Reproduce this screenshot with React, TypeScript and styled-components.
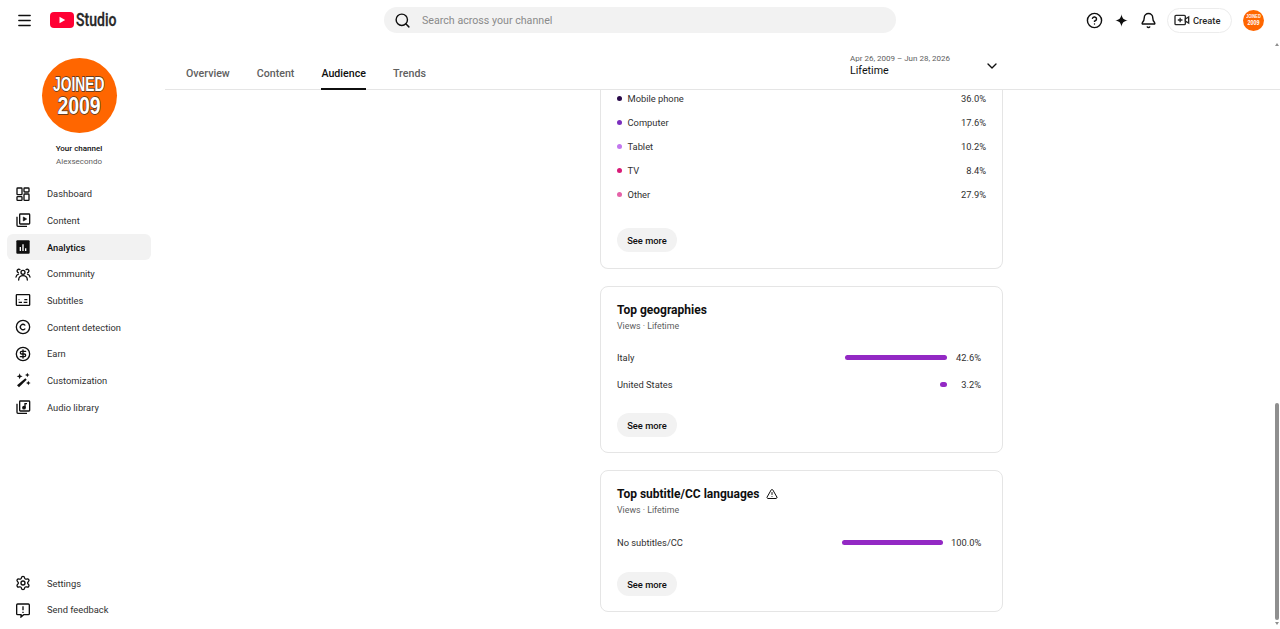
import React from 'react';
import styled, { createGlobalStyle } from 'styled-components';
import {
  Bell,
  ChevronDown,
  CircleDollarSign,
  CircleHelp,
  Copyright,
  Menu,
  Search,
  Settings,
  TriangleAlert,
} from 'lucide-react';

const GlobalStyle = createGlobalStyle`
  html, body {
    margin: 0;
    height: 100%;
    overflow: hidden;
    background: #fff;
    font-family: Roboto, "Liberation Sans", sans-serif;
    color: #0f0f0f;
  }
`;

const Page = styled.div`
  position: relative;
  height: 100vh;
  display: flex;
  flex-direction: column;
  overflow: hidden;
`;

const TopBar = styled.header`
  height: 40px;
  flex: none;
  display: grid;
  grid-template-columns: 384px 512px 1fr;
  align-items: center;
`;

const Brand = styled.div`
  display: flex;
  align-items: center;
  padding-left: 16px;
  color: #0f0f0f;
`;

const LogoLink = styled.div`
  display: flex;
  align-items: center;
  margin-left: 17px;
`;

const LogoWord = styled.span`
  display: inline-block;
  font-size: 18.5px;
  font-weight: 500;
  color: #282828;
  -webkit-text-stroke: 0.3px #282828;
  transform: scaleX(0.76);
  transform-origin: left center;
  margin-left: 2px;
`;

const SearchBox = styled.div`
  height: 26px;
  border-radius: 13px;
  background: #f2f2f2;
  display: flex;
  align-items: center;
  gap: 11px;
  padding-left: 10px;
  font-size: 10.67px;
  color: #8a8a8a;
  svg {
    color: #0f0f0f;
  }
`;

const Actions = styled.div`
  display: flex;
  align-items: center;
  justify-content: flex-end;
  padding-right: 16px;
`;

const ActionIcon = styled.span`
  width: 27px;
  display: flex;
  justify-content: center;
  color: #0f0f0f;
`;

const CreateButton = styled.div`
  width: 65px;
  height: 25px;
  box-sizing: border-box;
  margin: 0 11px 0 5px;
  border: 1px solid #ececec;
  border-radius: 13px;
  display: flex;
  align-items: center;
  gap: 3px;
  padding-left: 6px;
  font-size: 9.33px;
  font-weight: 500;
  color: #282828;
`;

const Avatar = styled.div<{ $size: number }>`
  width: ${({ $size }) => $size}px;
  height: ${({ $size }) => $size}px;
  flex: none;
  border-radius: 50%;
  background: #ff6600;
  display: flex;
  flex-direction: column;
  align-items: center;
  justify-content: center;
  color: #fff;
  font-family: "Liberation Sans", sans-serif;
  font-weight: 700;
  font-size: ${({ $size }) => $size * 0.27}px;
  line-height: ${({ $size }) => $size * 0.27}px;
  -webkit-text-stroke: ${({ $size }) => ($size > 40 ? '1.5px #4a3326' : '0')};
  paint-order: stroke fill;
`;

const AvatarTop = styled.span`
  display: block;
  transform: scaleX(0.68);
`;

const AvatarBottom = styled.span`
  display: block;
  font-size: 1.2em;
  line-height: 0.9em;
  transform: scaleX(0.8);
`;

const Body = styled.div`
  flex: 1;
  min-height: 0;
  display: flex;
`;

const Sidebar = styled.aside`
  width: 165px;
  flex: none;
  display: flex;
  flex-direction: column;
  padding-bottom: 6px;
  box-sizing: border-box;
`;

const ChannelInfo = styled.div`
  display: flex;
  flex-direction: column;
  align-items: center;
  padding: 18px 7px 0 0;
  margin-bottom: 13.5px;
`;

const ChannelLabel = styled.div`
  margin-top: 11px;
  font-size: 8px;
  line-height: 10px;
  font-weight: 500;
`;

const ChannelName = styled.div`
  margin-top: 3px;
  font-size: 8px;
  line-height: 10px;
  color: #606060;
`;

const NavList = styled.nav<{ $bottom?: boolean }>`
  display: flex;
  flex-direction: column;
  margin-top: ${({ $bottom }) => ($bottom ? 'auto' : '0')};
`;

const NavItem = styled.div<{ $active?: boolean }>`
  height: 26.67px;
  margin: 0 14px 0 7px;
  padding-left: 8px;
  display: flex;
  align-items: center;
  gap: 16px;
  border-radius: 6px;
  font-size: 9.33px;
  font-weight: ${({ $active }) => ($active ? 500 : 400)};
  color: ${({ $active }) => ($active ? '#0f0f0f' : '#303030')};
  background: ${({ $active }) => ($active ? '#f2f2f2' : 'transparent')};
  svg {
    flex: none;
    color: #0f0f0f;
  }
`;

const Main = styled.main`
  flex: 1;
  min-width: 0;
  display: flex;
  flex-direction: column;
`;

const TabBar = styled.div`
  height: 50px;
  flex: none;
  box-sizing: border-box;
  border-bottom: 1px solid #e5e5e5;
  display: flex;
  align-items: flex-end;
  padding: 0 277px 0 21px;
`;

const Tab = styled.div<{ $active?: boolean }>`
  height: 32px;
  box-sizing: border-box;
  margin-right: 27px;
  margin-bottom: -1px;
  padding-top: 9px;
  font-size: 10.67px;
  line-height: 14px;
  font-weight: 500;
  color: ${({ $active }) => ($active ? '#0f0f0f' : '#606060')};
  border-bottom: 2px solid ${({ $active }) => ($active ? '#0f0f0f' : 'transparent')};
`;

const DateRange = styled.div`
  margin-left: auto;
  width: 153px;
  align-self: stretch;
  display: flex;
  align-items: center;
  justify-content: space-between;
  padding-right: 3px;
  box-sizing: border-box;
  margin-top: 2px;
`;

const DateText = styled.div`
  display: flex;
  flex-direction: column;
`;

const DateSpan = styled.div`
  font-size: 8px;
  line-height: 11px;
  color: #606060;
`;

const DateLabel = styled.div`
  font-size: 10.67px;
  line-height: 14px;
`;

const ScrollArea = styled.div`
  flex: 1;
  min-height: 0;
  overflow: hidden;
  padding-left: 435px;
`;

const Card = styled.section<{ $clipped?: boolean; $inset: number }>`
  width: 403px;
  box-sizing: border-box;
  margin-bottom: 17px;
  padding: ${({ $clipped, $inset }) => ($clipped ? `0 ${$inset}px 16px 16px` : `13.5px ${$inset}px 15px 16px`)};
  border: 1px solid #e5e5e5;
  border-top-width: ${({ $clipped }) => ($clipped ? 0 : 1)}px;
  border-radius: ${({ $clipped }) => ($clipped ? '0 0 8px 8px' : '8px')};
`;

const CardTitle = styled.h2`
  margin: 0;
  display: flex;
  align-items: center;
  gap: 7px;
  font-size: 12px;
  line-height: 18px;
  font-weight: 700;
  color: #0f0f0f;
`;

const CardSub = styled.div`
  font-size: 8.8px;
  line-height: 14px;
  color: #606060;
  margin-bottom: 12px;
`;

const DeviceList = styled.div`
  margin-top: -4px;
`;

const DeviceRow = styled.div`
  height: 24px;
  display: flex;
  align-items: center;
  font-size: 9.33px;
  color: #303030;
`;

const Dot = styled.span<{ $color: string }>`
  width: 5px;
  height: 5px;
  border-radius: 50%;
  background: ${({ $color }) => $color};
  margin-right: 5.5px;
`;

const Share = styled.span`
  margin-left: auto;
`;

const BarRow = styled.div`
  height: 26.67px;
  display: flex;
  align-items: center;
  font-size: 9.33px;
  color: #303030;
`;

const Bar = styled.span<{ $width: number }>`
  width: ${({ $width }) => $width}px;
  height: 5px;
  border-radius: 3px;
  background: #9329c4;
  margin: 0 8.5px 0 auto;
`;

const BarValue = styled.span<{ $width: number }>`
  width: ${({ $width }) => $width}px;
  text-align: right;
`;

const SeeMore = styled.button<{ $gap: number }>`
  display: block;
  width: 60px;
  height: 24px;
  margin-top: ${({ $gap }) => $gap}px;
  padding: 0;
  border: 0;
  border-radius: 12px;
  background: #f2f2f2;
  font-family: inherit;
  font-size: 9.33px;
  font-weight: 500;
  color: #0f0f0f;
`;

const ScrollThumb = styled.div`
  position: absolute;
  right: 1px;
  top: 403px;
  width: 4px;
  height: 217px;
  border-radius: 2px;
  background: #8f8f8f;
`;

const ScrollArrow = styled.div<{ $down?: boolean }>`
  position: absolute;
  right: 1px;
  top: ${({ $down }) => ($down ? '622px' : '43px')};
  width: 0;
  height: 0;
  border-left: 2px solid transparent;
  border-right: 2px solid transparent;
  border-${({ $down }) => ($down ? 'top' : 'bottom')}: 3px solid #8f8f8f;
`;

const DashboardIcon = () => (
  <svg width="16" height="16" viewBox="0 0 24 24" fill="none" stroke="currentColor" strokeWidth="2">
    <rect x="3" y="3" width="7.5" height="10" rx="1" />
    <rect x="13.5" y="3" width="7.5" height="6" rx="1" />
    <rect x="3" y="16" width="7.5" height="5.5" rx="1" />
    <rect x="13.5" y="12" width="7.5" height="9.5" rx="1" />
  </svg>
);

const ContentIcon = () => (
  <svg width="16" height="16" viewBox="0 0 24 24" fill="none" stroke="currentColor" strokeWidth="2">
    <rect x="7" y="3" width="15" height="15" rx="1" />
    <path d="M3 7v13a1.5 1.5 0 0 0 1.5 1.5H18" />
    <path d="M12.5 7.500v6l5-3z" fill="currentColor" strokeWidth="1" />
  </svg>
);

const AnalyticsIcon = () => (
  <svg width="16" height="16" viewBox="0 0 24 24">
    <rect x="2" y="2" width="20" height="20" rx="1.5" fill="currentColor" />
    <path d="M7 12h2v6H7zM11 8h2v10h-2zM15 14h2v4h-2z" fill="#fff" />
  </svg>
);

const CommunityIcon = () => (
  <svg width="16" height="16" viewBox="0 0 24 24" fill="none" stroke="currentColor" strokeWidth="2" strokeLinecap="round">
    <circle cx="12" cy="9.500" r="3" />
    <path d="M5.500 21c0-4 3-6.500 6.500-6.500s6.500 2.500 6.500 6.500" />
    <path d="M7.500 5.500a2.600 2.600 0 1 0-2.500 4.400M1.500 16.500c.4-2.500 2-4 3.800-4.400" />
    <path d="M16.500 5.500a2.600 2.600 0 1 1 2.500 4.400M22.500 16.500c-.4-2.500-2-4-3.800-4.400" />
  </svg>
);

const SubtitlesIcon = () => (
  <svg width="16" height="16" viewBox="0 0 24 24" fill="none" stroke="currentColor" strokeWidth="2">
    <rect x="2" y="4" width="20" height="16" rx="1" />
    <path d="M5.500 15.500h5M13 15.500h5.500M14 11.500h4.500M5.500 11.500h1" strokeWidth="1.800" />
  </svg>
);

const WandIcon = () => (
  <svg width="16" height="16" viewBox="0 0 24 24" fill="currentColor">
    <path d="M15.500 9.500l2 2L6 23l-3-3z" />
    <path d="M7 2l1.200 3.300L11.500 6.500 8.200 7.700 7 11 5.800 7.700 2.500 6.500l3.300-1.200zM18.500 1l1 2.500L22 4.500l-2.500 1-1 2.500-1-2.500-2.500-1 2.500-1zM20 13l1 2.500 2.500 1-2.500 1-1 2.500-1-2.500-2.500-1 2.500-1z" />
  </svg>
);

const AudioIcon = () => (
  <svg width="16" height="16" viewBox="0 0 24 24" fill="none" stroke="currentColor" strokeWidth="2">
    <rect x="7" y="3" width="15" height="15" rx="1" />
    <path d="M3 7v13a1.500 1.500 0 0 0 1.500 1.500H18" />
    <circle cx="13.500" cy="13" r="1.800" fill="currentColor" />
    <path d="M15 13V7h3" />
  </svg>
);

const FeedbackIcon = () => (
  <svg width="16" height="16" viewBox="0 0 24 24" fill="none" stroke="currentColor" strokeWidth="2">
    <path d="M4 3h16a1.500 1.500 0 0 1 1.500 1.500v13A1.500 1.500 0 0 1 20 19h-7l-4 3.500V19H4a1.500 1.500 0 0 1-1.500-1.500v-13A1.500 1.500 0 0 1 4 3z" />
    <path d="M12 6.500v6M12 14.500v2" />
  </svg>
);

const LogoIcon = () => (
  <svg width="24" height="16" viewBox="0 0 24 16">
    <rect x="0" y="0" width="24" height="16" rx="4" fill="#ff0033" />
    <path d="M9.500 4.700v6.600l5.700-3.300z" fill="#fff" />
  </svg>
);

const SparkIcon = () => (
  <svg width="15" height="15" viewBox="0 0 24 24" fill="currentColor">
    <path d="M12 2c1 6.500 3.500 9 10 10-6.500 1-9 3.500-10 10-1-6.500-3.500-9-10-10 6.500-1 9-3.500 10-10z" />
  </svg>
);

const CreateIcon = () => (
  <svg width="16" height="16" viewBox="0 0 24 24" fill="none" stroke="currentColor" strokeWidth="2">
    <rect x="1.500" y="5" width="15.500" height="14" rx="1.500" />
    <path d="M9.200 8.500v7M5.700 12h7" />
    <path d="M17 10.500l5-3v9l-5-3z" />
  </svg>
);

const topNav = [
  { label: 'Dashboard', icon: <DashboardIcon /> },
  { label: 'Content', icon: <ContentIcon /> },
  { label: 'Analytics', icon: <AnalyticsIcon />, active: true },
  { label: 'Community', icon: <CommunityIcon /> },
  { label: 'Subtitles', icon: <SubtitlesIcon /> },
  { label: 'Content detection', icon: <Copyright size={16} /> },
  { label: 'Earn', icon: <CircleDollarSign size={16} /> },
  { label: 'Customization', icon: <WandIcon /> },
  { label: 'Audio library', icon: <AudioIcon /> },
];

const devices = [
  { label: 'Mobile phone', share: '36.0%', color: '#2a0a4a' },
  { label: 'Computer', share: '17.6%', color: '#7b2fbe' },
  { label: 'Tablet', share: '10.2%', color: '#c277ee' },
  { label: 'TV', share: '8.4%', color: '#d81b78' },
  { label: 'Other', share: '27.9%', color: '#e562a8' },
];

const tabs = ['Overview', 'Content', 'Audience', 'Trends'];

const App: React.FC = () => {
  return (
    <Page>
      <GlobalStyle />
      <TopBar>
        <Brand>
          <Menu size={17} />
          <LogoLink>
            <LogoIcon />
            <LogoWord>Studio</LogoWord>
          </LogoLink>
        </Brand>
        <SearchBox>
          <Search size={17} />
          Search across your channel
        </SearchBox>
        <Actions>
          <ActionIcon><CircleHelp size={17} /></ActionIcon>
          <ActionIcon><SparkIcon /></ActionIcon>
          <ActionIcon><Bell size={17} /></ActionIcon>
          <CreateButton>
            <CreateIcon />
            Create
          </CreateButton>
          <Avatar $size={21}>
            <AvatarTop>JOINED</AvatarTop>
            <AvatarBottom>2009</AvatarBottom>
          </Avatar>
        </Actions>
      </TopBar>
      <Body>
        <Sidebar>
          <ChannelInfo>
            <Avatar $size={75}>
              <AvatarTop>JOINED</AvatarTop>
              <AvatarBottom>2009</AvatarBottom>
            </Avatar>
            <ChannelLabel>Your channel</ChannelLabel>
            <ChannelName>Alexsecondo</ChannelName>
          </ChannelInfo>
          <NavList>
            {topNav.map((item) => (
              <NavItem key={item.label} $active={item.active}>
                {item.icon}
                {item.label}
              </NavItem>
            ))}
          </NavList>
          <NavList $bottom>
            <NavItem>
              <Settings size={16} />
              Settings
            </NavItem>
            <NavItem>
              <FeedbackIcon />
              Send feedback
            </NavItem>
          </NavList>
        </Sidebar>
        <Main>
          <TabBar>
            {tabs.map((tab) => (
              <Tab key={tab} $active={tab === 'Audience'}>{tab}</Tab>
            ))}
            <DateRange>
              <DateText>
                <DateSpan>Apr 26, 2009 – Jun 28, 2026</DateSpan>
                <DateLabel>Lifetime</DateLabel>
              </DateText>
              <ChevronDown size={16} />
            </DateRange>
          </TabBar>
          <ScrollArea>
            <Card $clipped $inset={16}>
              <DeviceList>
                {devices.map((device) => (
                  <DeviceRow key={device.label}>
                    <Dot $color={device.color} />
                    {device.label}
                    <Share>{device.share}</Share>
                  </DeviceRow>
                ))}
              </DeviceList>
              <SeeMore $gap={22}>See more</SeeMore>
            </Card>
            <Card $inset={21}>
              <CardTitle>Top geographies</CardTitle>
              <CardSub>Views · Lifetime</CardSub>
              <BarRow>
                Italy
                <Bar $width={102} />
                <BarValue $width={25.5}>42.6%</BarValue>
              </BarRow>
              <BarRow>
                United States
                <Bar $width={7} />
                <BarValue $width={25.5}>3.2%</BarValue>
              </BarRow>
              <SeeMore $gap={15.67}>See more</SeeMore>
            </Card>
            <Card $inset={21}>
              <CardTitle>
                Top subtitle/CC languages
                <TriangleAlert size={12} strokeWidth={2} />
              </CardTitle>
              <CardSub>Views · Lifetime</CardSub>
              <BarRow>
                No subtitles/CC
                <Bar $width={101} />
                <BarValue $width={30}>100.0%</BarValue>
              </BarRow>
              <SeeMore $gap={16.67}>See more</SeeMore>
            </Card>
          </ScrollArea>
        </Main>
      </Body>
      <ScrollArrow />
      <ScrollThumb />
      <ScrollArrow $down />
    </Page>
  );
};

export default App;
